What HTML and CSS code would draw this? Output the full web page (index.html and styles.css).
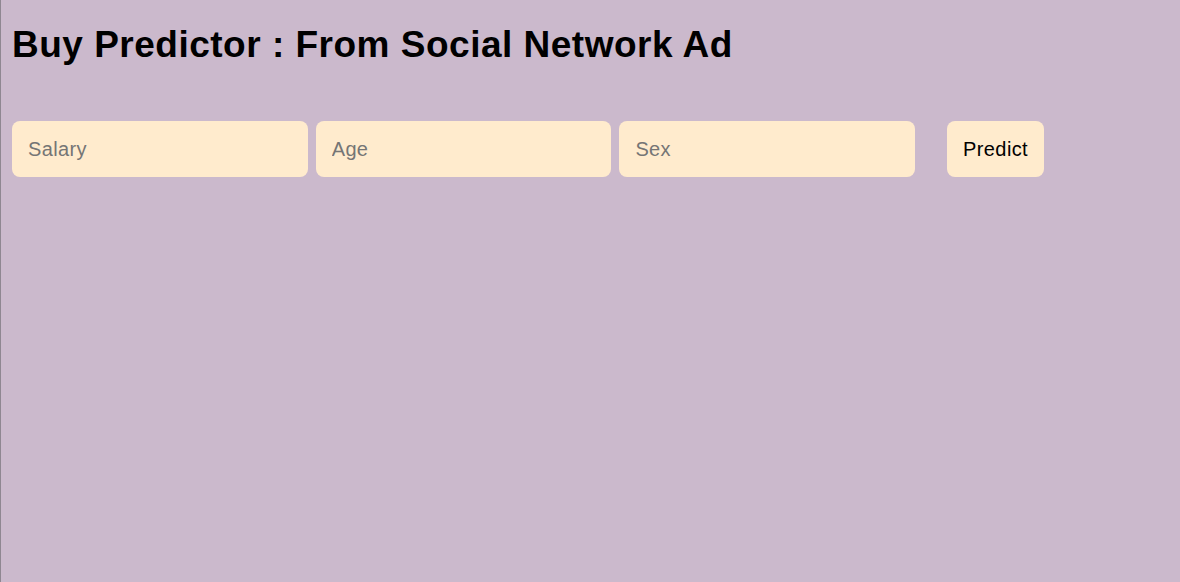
FILE: index.html
```html
<!DOCTYPE html>
<html>
<head>
<meta charset="utf-8">
<link rel="stylesheet" href="styles.css">
</head>
<body>
<div class="page">
  <h1 class="title">Buy Predictor : From Social Network Ad</h1>
  <form class="form">
    <input class="field" type="text" placeholder="Salary">
    <input class="field" type="text" placeholder="Age">
    <input class="field" type="text" placeholder="Sex">
    <button class="btn" type="button">Predict</button>
  </form>
</div>
</body>
</html>
```
FILE: styles.css
```css
html, body {
  margin: 0;
  padding: 0;
  height: 100%;
}
body {
  background: #cbb9cc;
  font-family: "Liberation Sans", Arial, sans-serif;
  border-left: 1px solid #8f8791;
  box-sizing: border-box;
}
.page {
  padding: 8px 0 0 11px;
}
.title {
  font-size: 37px;
  letter-spacing: 0.5px;
  font-weight: bold;
  margin: 16px 0 0 0;
  line-height: 42px;
  color: #000;
}
.form {
  display: flex;
  align-items: center;
  margin-top: 55px;
  gap: 8px;
}
.field {
  width: 295.7px;
  height: 56px;
  box-sizing: border-box;
  border: none;
  border-radius: 8px;
  background: #ffebcd;
  padding: 0 16px;
  font-family: "Liberation Sans", Arial, sans-serif;
  font-size: 20px;
  letter-spacing: 0.35px;
  color: #000;
  outline: none;
}
.field::placeholder {
  color: #757575;
}
.btn {
  margin-left: 24px;
  width: 97px;
  height: 56px;
  border: none;
  border-radius: 8px;
  background: #ffebcd;
  font-family: "Liberation Sans", Arial, sans-serif;
  font-size: 20px;
  letter-spacing: 0.4px;
  color: #000;
  padding: 0;
}
```
